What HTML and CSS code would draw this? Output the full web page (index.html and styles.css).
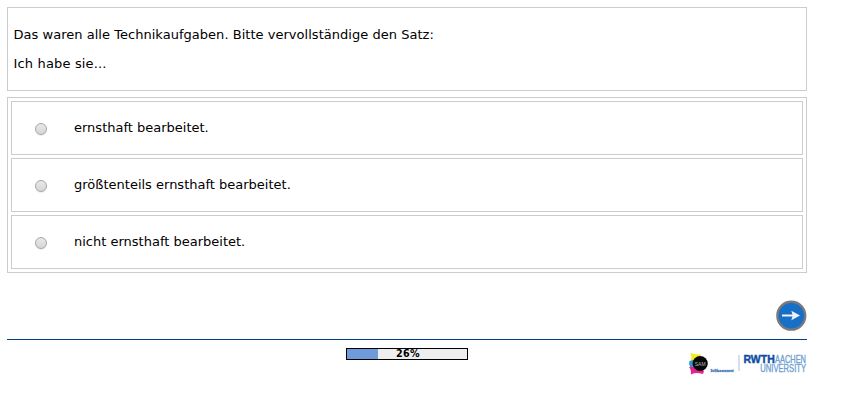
FILE: index.html
```
<!DOCTYPE html>
<html lang="de">
<head>
<meta charset="utf-8">
<title>Technikaufgaben</title>
<link rel="stylesheet" href="styles.css">
</head>
<body>
<form class="page">
  <section class="question">
    <p class="intro">Das waren alle Technikaufgaben. Bitte vervollständige den Satz:</p>
    <p class="stem">Ich habe sie...</p>
  </section>
  <section class="answers">
    <label class="answer"><input class="radio" type="radio" name="a"><span>ernsthaft bearbeitet.</span></label>
    <label class="answer"><input class="radio" type="radio" name="a"><span>größtenteils ernsthaft bearbeitet.</span></label>
    <label class="answer"><input class="radio" type="radio" name="a"><span>nicht ernsthaft bearbeitet.</span></label>
  </section>
  <div class="nav">
    <button class="next" type="button" aria-label="Weiter">
      <svg width="32" height="32" viewBox="0 0 32 32">
        <circle cx="16.3" cy="15.7" r="13.9" fill="#176fc8" stroke="#77797c" stroke-width="2.4"/>
        <path d="M7 14.4H17.5L16.3 10.8L25 15.5L16.3 20.2L17.5 16.6H7Z" fill="#eef3f8"/>
      </svg>
    </button>
  </div>
  <footer class="footer">
    <div class="progress"><div class="bar"></div><span class="percent">26%</span></div>
    <svg class="logos" width="130" height="32" viewBox="0 0 130 32">
      <path d="M5.500 2Q10 3.500 16 3.500L12 12L5 11Q7.500 7 5.500 2Z" fill="#f3eb22"/>
      <path d="M4.500 10L12 8L12 17L7 19Q3 14 4.500 10Z" fill="#2b98c9"/>
      <path d="M4 16L12 16L19 20L18 23Q11 21 6 23.500Q6.500 19 4 16Z" fill="#e5238f"/>
      <circle cx="15.2" cy="12.500" r="7.600" fill="#080808"/>
      <text class="sam" x="9.7" y="14.500" textLength="11">SAM</text>
      <text class="self" x="25.500" y="21.300" textLength="23" lengthAdjust="spacingAndGlyphs">SelfAssessment</text>
      <path d="M54 4V20" stroke="#a9c1dc" stroke-width="1"/>
      <text class="rwth" x="58.500" y="12" textLength="31.200" lengthAdjust="spacingAndGlyphs">RWTH</text>
      <text class="uni" x="90" y="12" textLength="31" lengthAdjust="spacingAndGlyphs">AACHEN</text>
      <text class="uni" x="75.300" y="21" textLength="45.700" lengthAdjust="spacingAndGlyphs">UNIVERSITY</text>
    </svg>
  </footer>
</form>
</body>
</html>
```
FILE: styles.css
```
body {
  margin: 0;
  background: #fff;
  color: #000;
  font: 13px/16px Verdana, "DejaVu Sans", sans-serif;
}
.page {
  width: 800px;
  margin: 7px 0 0 7px;
}
.question {
  box-sizing: border-box;
  height: 84px;
  padding: 19px 5.5px 0;
  border: 1px solid #ccc;
}
.question p {
  margin: 0 0 13px;
}
.intro {
  letter-spacing: .03px;
}
.stem {
  letter-spacing: .16px;
}
.answers {
  display: flex;
  flex-direction: column;
  gap: 3px;
  margin-top: 6px;
  padding: 3px;
  border: 1px solid #ccc;
}
.answer {
  display: flex;
  box-sizing: border-box;
  height: 54px;
  padding: 18px 23px 0;
  border: 1px solid #ccc;
}
.radio {
  appearance: none;
  box-sizing: border-box;
  width: 12px;
  height: 12px;
  margin: 3px 27px 0 0;
  border: 1px solid #a6a6a6;
  border-radius: 50%;
  background: linear-gradient(#e8e8e8, #d6d6d6);
  box-shadow: 0 1px 1px #eee;
}
.radio:checked {
  background: radial-gradient(#444 35%, #ddd 40%);
}
.nav {
  display: flex;
  justify-content: flex-end;
  height: 66px;
  padding-top: 27px;
  box-sizing: border-box;
}
.next {
  width: 32px;
  height: 32px;
  padding: 0;
  border: 0;
  background: none;
}
.next svg {
  display: block;
}
.footer {
  display: grid;
  grid-template-columns: 1fr 122px 1fr;
  align-items: start;
  border-top: 1px solid #003f8f;
}
.progress {
  display: grid;
  grid-column: 2;
  box-sizing: border-box;
  height: 12px;
  margin-top: 8px;
  border: 1px solid #000;
  background: #eee;
}
.bar {
  grid-area: 1 / 1;
  width: 31px;
  height: 10px;
  background: #6f9bdb;
}
.percent {
  grid-area: 1 / 1;
  padding-left: 2px;
  font-size: 9.6px;
  font-weight: bold;
  letter-spacing: .3px;
  line-height: 10px;
  text-align: center;
}
.logos {
  justify-self: end;
  margin: 11px -8px 0 0;
  overflow: visible;
}
.sam {
  fill: #bbb;
  font: 5px "Liberation Sans", sans-serif;
}
.self {
  fill: #3f78b8;
  stroke: #3f78b8;
  stroke-width: .3px;
  font: bold 4px "Liberation Sans", sans-serif;
}
.rwth {
  fill: #0c4da2;
  stroke: #0c4da2;
  stroke-width: .4px;
  font: bold 10.5px "Liberation Sans", sans-serif;
}
.uni {
  fill: #6f9fd2;
  stroke: #6f9fd2;
  stroke-width: .35px;
  font: 10.5px "Liberation Sans", sans-serif;
}
```
